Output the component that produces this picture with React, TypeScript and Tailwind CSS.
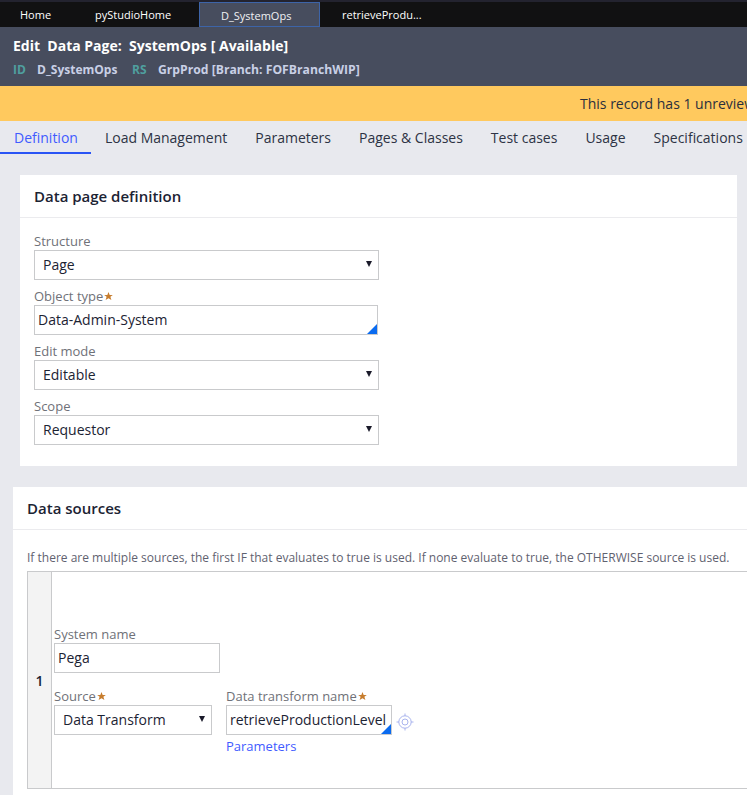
import React from "react";

function Arrow() {
  return <span className="absolute right-[6px] top-[10px] w-0 h-0 border-l-[3px] border-r-[3px] border-t-[6px] border-l-transparent border-r-transparent border-t-[#1a1a2a]" />;
}

function Field({ label, req, children, cls }: { label: string; req?: boolean; children: React.ReactNode; cls?: string }) {
  return (
    <div className={cls}>
      <div className="h-[18px] text-[13px] leading-[18px] text-[#6f7178] flex items-center">
        {label}
        {req && <Star />}
      </div>
      {children}
    </div>
  );
}

function Star() {
  return (
    <svg width="9" height="9" viewBox="0 0 10 10" className="ml-[1px] mt-[1px]">
      <path d="M5 0 L6.3 3.2 L9.8 3.2 L7.1 5.4 L8.2 9 L5 7 L1.8 9 L2.9 5.4 L0.2 3.2 L3.7 3.2 Z" fill="#c77d2e" />
    </svg>
  );
}

function Select({ value, w, pl = "pl-[8px]" }: { value: string; w: string; pl?: string }) {
  return (
    <div className={`relative h-[30px] border border-[#c9cacc] bg-white text-[14px] leading-[28px] text-[#1c2333] ${w} ${pl}`}>
      {value}
      <Arrow />
    </div>
  );
}

function Corner() {
  return (
    <span className="absolute right-0 bottom-0 w-0 h-0 border-l-[10px] border-l-transparent border-b-[10px] border-b-[#0a6bf0]" />
  );
}

export default function App() {
  const tabs = ["Definition", "Load Management", "Parameters", "Pages & Classes", "Test cases", "Usage", "Specifications"];
  return (
    <div className="w-[747px] h-[795px] overflow-hidden bg-[#e8e9ee] font-['Open_Sans',sans-serif]">
      <div className="h-[2px] bg-[#23232f]" />
      <div className="h-[25px] bg-[#111112] flex text-[11px] text-white">
        <div className="w-[71px] pl-[20px] leading-[25px]">Home</div>
        <div className="w-[128px] pl-[24px] leading-[25px]">pyStudioHome</div>
        <div className="w-[121px] mr-[22px] h-[25px] bg-[#474d5e] border border-[#3d64a8] pl-[21px] leading-[26px] text-[#f0f1f4]">D_SystemOps</div>
        <div className="leading-[26px]">retrieveProdu...</div>
      </div>
      <div className="h-[59px] bg-[#474d5e] pl-[13px] pt-[9px]">
        <div className="h-[20px] leading-[20px] text-[14px] font-bold text-white whitespace-pre flex">
          <span>Edit  Data Page:  SystemOps</span>
          <span className="ml-[4px]">[ Available]</span>
        </div>
        <div className="mt-[5px] text-[12px] font-bold leading-[17px] text-[#c9d0e6] flex">
          <span className="text-[#4f9f9f] w-[24px]">ID</span>
          <span className="w-[95px]">D_SystemOps</span>
          <span className="text-[#4f9f9f] w-[26px]">RS</span>
          <span className="text-[12.2px]">GrpProd [Branch: FOFBranchWIP]</span>
        </div>
      </div>
      <div className="h-[35px] bg-[#ffc95e] pl-[580px] text-[14px] leading-[36px] text-[#2a2f3d] whitespace-nowrap overflow-hidden">
        This record has 1 unreviewed
      </div>
      <div className="h-[33px] flex text-[14px] leading-[33px] text-[#2d3344] whitespace-nowrap overflow-hidden">
        {tabs.map((t, i) => (
          <div key={t} className={i === 0 ? "pl-[14px] pr-[13px] text-[#3f5bff] border-b-2 border-[#2a54f5] h-[33px]" : "px-[14px]"}>
            {t}
          </div>
        ))}
      </div>

      <div className="mt-[21px] ml-[20px] mr-[10px] h-[291px] bg-white">
        <div className="h-[43px] border-b border-[#ebebee] pl-[14px] text-[15px] font-semibold leading-[42px] text-[#1c2333]">Data page definition</div>
        <div className="pl-[14px] pt-[14px]">
          <Field label="Structure"><Select value="Page" w="w-[345px]" /></Field>
          <Field label="Object type" req cls="mt-[7px]">
            <div className="relative w-[344px] h-[30px] border border-[#c9cacc] pl-[3px] text-[14px] leading-[28px] text-[#1c2333]">
              Data-Admin-System
              <Corner />
            </div>
          </Field>
          <Field label="Edit mode" cls="mt-[7px]"><Select value="Editable" w="w-[345px]" /></Field>
          <Field label="Scope" cls="mt-[7px]"><Select value="Requestor" w="w-[345px]" /></Field>
        </div>
      </div>

      <div className="mt-[21px] ml-[13px] h-[308px] bg-white">
        <div className="h-[43px] border-b border-[#ebebee] pl-[14px] text-[15px] font-semibold leading-[42px] text-[#1c2333]">Data sources</div>
        <div className="pl-[14px]">
          <div className="pt-[19px] h-[41px] text-[12px] leading-[18px] text-[#5f6270] whitespace-nowrap">
            If there are multiple sources, the first IF that evaluates to true is used. If none evaluate to true, the OTHERWISE source is used.
          </div>
          <div className="h-[218px] border-t border-b border-l border-[#c9cacc] flex">
            <div className="w-[24px] bg-[#f3f3f3] border-r border-[#c9cacc] flex items-center justify-center text-[14px] font-semibold text-[#1c2333]">1</div>
            <div className="pl-[2px] pt-[53px]">
              <Field label="System name">
                <div className="w-[166px] h-[30px] border border-[#c9cacc] pl-[3px] text-[14px] leading-[28px] text-[#1c2333]">Pega</div>
              </Field>
              <div className="flex mt-[14px]">
                <Field label="Source" req cls="w-[172px]">
                  <Select value="Data Transform" w="w-[158px]" />
                </Field>
                <div>
                  <Field label="Data transform name" req>
                    <div className="flex items-center">
                      <div className="relative w-[166px] h-[30px] border border-[#c9cacc] pl-[3px] text-[14px] leading-[28px] text-[#1c2333] overflow-hidden whitespace-nowrap">
                        retrieveProductionLevel
                        <Corner />
                      </div>
                      <svg width="18" height="18" viewBox="0 0 18 18" className="ml-[4px] mt-[3px]" fill="none" stroke="#a9b4ee" strokeWidth="1">
                        <circle cx="9" cy="9" r="6.2" />
                        <circle cx="9" cy="9" r="3" />
                        <path d="M9 0.5V3M9 15V17.5M0.5 9H3M15 9H17.5" />
                      </svg>
                    </div>
                  </Field>
                  <div className="text-[13px] leading-[16px] mt-[3px] text-[#3f5bff]">Parameters</div>
                </div>
              </div>
            </div>
          </div>
        </div>
      </div>
    </div>
  );
}
